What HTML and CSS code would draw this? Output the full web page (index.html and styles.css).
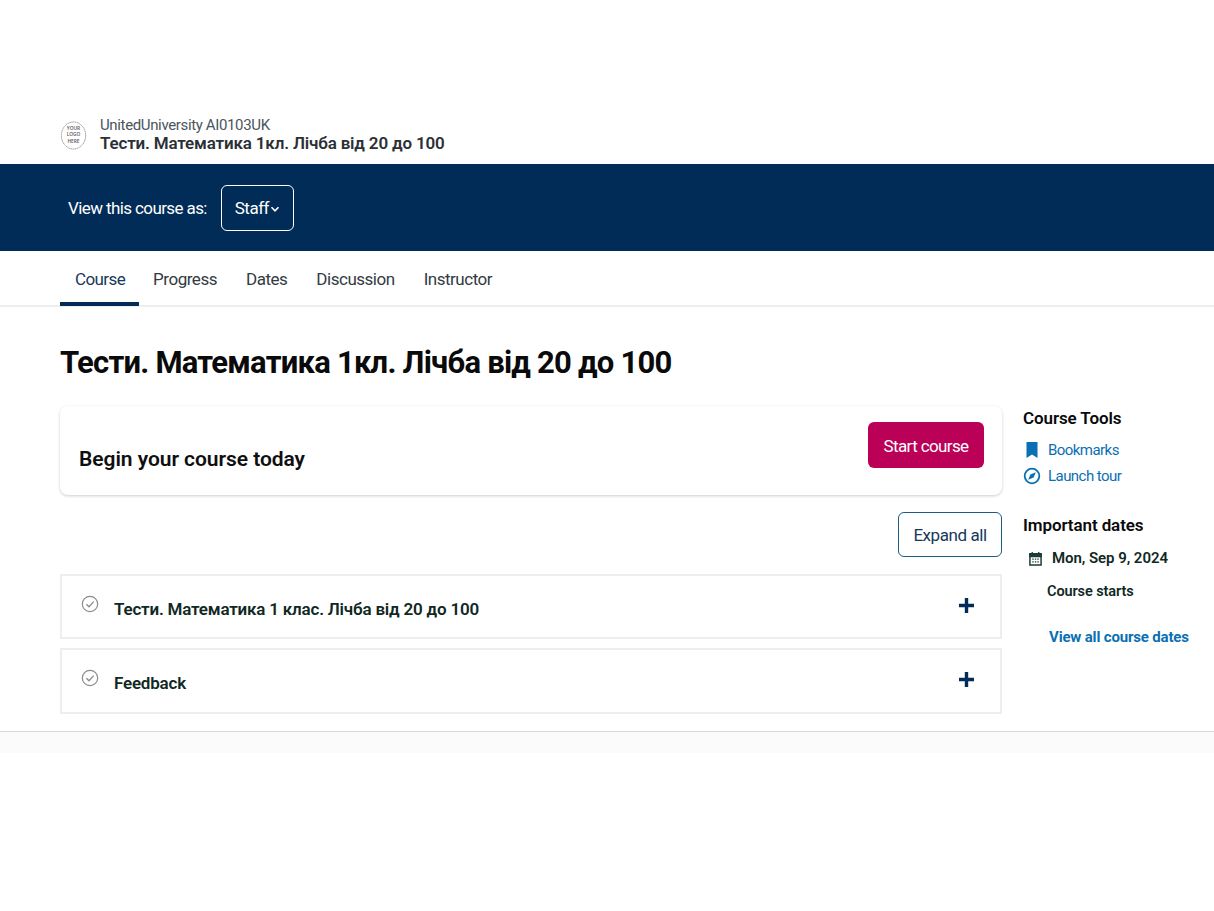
FILE: index.html
```html
<!DOCTYPE html>
<html lang="uk">
<head>
<meta charset="utf-8">
<title>Тести. Математика 1кл.</title>
<link rel="stylesheet" href="styles.css">
</head>
<body>
<header class="site-header">
  <svg class="logo" viewBox="0 0 28 32" width="27" height="31" aria-hidden="true">
    <ellipse cx="14" cy="16" rx="12.6" ry="14" fill="#fff" stroke="#8f8f8f" stroke-width="1" stroke-dasharray="1.4 .6"/>
    <text x="14" y="10.5" class="logo-text">YOUR</text>
    <text x="14" y="17" class="logo-text">LOGO</text>
    <text x="14" y="23.5" class="logo-text">HERE</text>
  </svg>
  <div class="header-text">
    <div class="org">UnitedUniversity AI0103UK</div>
    <div class="header-title">Тести. Математика 1кл. Лічба від 20 до 100</div>
  </div>
</header>
<div class="masquerade">
  <span class="mq-label">View this course as:</span>
  <button class="mq-btn">Staff<svg class="chev" viewBox="0 0 10 10" width="10" height="10"><path d="M1.500 3.200 5 6.800l3.500-3.600" fill="none" stroke="#fff" stroke-width="1.600"/></svg></button>
</div>
<nav class="tabs">
  <a class="tab active">Course</a>
  <a class="tab">Progress</a>
  <a class="tab">Dates</a>
  <a class="tab">Discussion</a>
  <a class="tab">Instructor</a>
</nav>
<main class="content">
  <h1 class="page-title">Тести. Математика 1кл. Лічба від 20 до 100</h1>
  <div class="columns">
    <div class="main-col">
      <section class="start-card">
        <h2 class="start-heading">Begin your course today</h2>
        <button class="start-btn">Start course</button>
      </section>
      <div class="expand-row"><button class="expand-btn">Expand all</button></div>
      <section class="outline-row">
        <svg class="check" viewBox="0 0 18 18" width="18" height="18"><circle cx="9" cy="9" r="7.700" fill="none" stroke="#8c8c8c" stroke-width="1.200"/><path d="M5.400 9.200 8 11.800l4.700-5.200" fill="none" stroke="#8c8c8c" stroke-width="1.300"/></svg>
        <span class="outline-title">Тести. Математика 1 клас. Лічба від 20 до 100</span>
        <svg class="plus" viewBox="0 0 15 15" width="15" height="15"><path d="M7.500 0v15M0 7.500h15" stroke="#002c57" stroke-width="3.400"/></svg>
      </section>
      <section class="outline-row">
        <svg class="check" viewBox="0 0 18 18" width="18" height="18"><circle cx="9" cy="9" r="7.700" fill="none" stroke="#8c8c8c" stroke-width="1.200"/><path d="M5.400 9.200 8 11.800l4.700-5.200" fill="none" stroke="#8c8c8c" stroke-width="1.300"/></svg>
        <span class="outline-title">Feedback</span>
        <svg class="plus" viewBox="0 0 15 15" width="15" height="15"><path d="M7.500 0v15M0 7.500h15" stroke="#002c57" stroke-width="3.400"/></svg>
      </section>
    </div>
    <aside class="sidebar">
      <h3 class="side-heading">Course Tools</h3>
      <a class="tool"><svg viewBox="0 0 18 18" width="18" height="18"><path d="M3.500 1h11v16L9 13.400 3.500 17z" fill="#0a6fb3"/></svg>Bookmarks</a>
      <a class="tool"><svg viewBox="0 0 18 18" width="18" height="18"><circle cx="9" cy="9" r="7.300" fill="none" stroke="#0a6fb3" stroke-width="1.800"/><path d="M12.800 5.200 10.600 10.600 5.200 12.800 7.400 7.400z" fill="#0a6fb3"/></svg>Launch tour</a>
      <h3 class="side-heading dates-heading">Important dates</h3>
      <div class="date-row"><svg viewBox="0 0 14 16" width="13" height="15"><path d="M1 3h12v12H1z" fill="none" stroke="#1c3a36" stroke-width="1.600"/><path d="M1 3h12v3H1zM3.500 1v2M10.500 1v2" fill="#1c3a36" stroke="#1c3a36" stroke-width="1.400"/><path d="M3.500 8h1.500v1.400H3.500zM6.300 8h1.500v1.400H6.300zM9 8h1.500v1.400H9zM3.500 11h1.500v1.400H3.500zM6.300 11h1.500v1.400H6.300zM9 11h1.500v1.400H9z" fill="#1c3a36"/></svg><span>Mon, Sep 9, 2024</span></div>
      <div class="date-desc">Course starts</div>
      <a class="all-dates">View all course dates</a>
    </aside>
  </div>
</main>
<footer class="footer"></footer>
</body>
</html>
```
FILE: styles.css
```css
* { box-sizing: border-box; }
html, body { margin: 0; padding: 0; background: #fff; }
body { font-family: Roboto, "Open Sans", sans-serif; color: #111; }
button { font-family: inherit; cursor: pointer; }

.site-header { height: 164px; padding: 118px 60px 0; display: flex; align-items: flex-start; gap: 13px; }
.logo { flex: none; margin-top: 2px; }
.logo-text { font-family: "Open Sans", sans-serif; font-size: 5px; font-weight: 600; text-anchor: middle; fill: #555; }
.header-text { display: flex; flex-direction: column; margin-top: -2px; }
.org { font-size: 15px; line-height: 18px; color: #4a5560; letter-spacing: -.36px; }
.header-title { font-size: 17px; line-height: 18px; font-weight: 600; color: #2b3036; letter-spacing: -.17px; }

.masquerade { height: 87px; background: #002c57; display: flex; align-items: center; padding: 0 68px; gap: 14px; }
.mq-label { color: #fff; font-size: 17px; letter-spacing: -.6px; padding-top: 1px; }
.mq-btn { width: 73px; height: 46px; background: transparent; border: 1px solid #fff; border-radius: 6px; color: #fff; font-size: 17px; letter-spacing: -.5px; display: flex; align-items: center; justify-content: center; gap: 1px; padding: 1px 0 0; }
.chev { flex: none; margin-top: 1px; }

.tabs { height: 56px; padding: 0 60px; display: flex; border-bottom: 2px solid #eeeeee; }
.tab { height: 55px; display: flex; align-items: center; padding: 1px 15px 0 14px; font-size: 17px; color: #333a41; letter-spacing: -.48px; }
.tab.active { color: #17385a; padding: 5px 14px 0 15px; letter-spacing: -.6px; border-bottom: 4px solid #002c57; }

.content { padding: 0 0 0 60px; height: 424px; }
.page-title { margin: 0; padding-top: 34px; font-size: 31px; line-height: 44px; font-weight: 700; color: #0a0a0a; letter-spacing: -.77px; }
.columns { display: flex; gap: 21px; margin-top: 21px; }
.main-col { width: 942px; flex: none; }

.start-card { height: 89px; background: #fff; border-radius: 8px; box-shadow: 0 1px 3px rgba(0,0,0,.2); padding: 16px 18px 0 19px; display: flex; justify-content: space-between; align-items: flex-start; }
.start-heading { margin: 0; padding-top: 21px; font-size: 21px; line-height: 32px; font-weight: 600; color: #0f0f0f; letter-spacing: -.05px; }
.start-btn { width: 116px; height: 46px; background: #bb0058; border: 0; border-radius: 6px; color: #fff; font-size: 17px; letter-spacing: -.63px; padding: 1px 0 0; }

.expand-row { display: flex; justify-content: flex-end; margin: 17px 0; }
.expand-btn { width: 104px; height: 45px; background: #fff; border: 1px solid #1b5c85; border-radius: 6px; color: #17385a; font-size: 17px; letter-spacing: -.44px; padding: 1px 0 0; }

.outline-row { height: 65px; border: 2px solid #eeeeee; margin-bottom: 9px; display: flex; align-items: flex-start; padding: 19px 26px 0 19px; }
.outline-row + .outline-row { height: 66px; }
.check { flex: none; margin-right: 15px; }
.outline-title { flex: 1; font-size: 17px; line-height: 26px; font-weight: 600; color: #10281f; margin-top: 1px; letter-spacing: -.2px; }
.plus { flex: none; margin-top: 3px; }

.sidebar { flex: 1; min-width: 0; }
.side-heading { margin: 0; font-size: 17px; line-height: 24px; font-weight: 600; color: #0a0a0a; letter-spacing: -.1px; }
.tool { display: flex; align-items: center; gap: 7px; height: 26px; font-size: 15px; color: #0a6fb3; letter-spacing: -.55px; }
.side-heading + .tool { margin-top: 7px; }
.dates-heading { margin-top: 24px; }
.date-row { display: flex; align-items: center; gap: 10px; height: 26px; margin: 8px 0 0 6px; font-size: 15px; font-weight: 600; color: #10281f; letter-spacing: -.05px; }
.date-row svg { flex: none; }
.date-desc { margin: 8px 0 0 24px; font-size: 14.500px; line-height: 26px; font-weight: 600; color: #10281f; letter-spacing: -.1px; }
.all-dates { display: block; margin: 19px 0 0 26px; font-size: 15px; line-height: 26px; font-weight: 700; color: #0a6fb3; white-space: nowrap; letter-spacing: -.17px; }

.footer { height: 22px; background: #fbfbfb; border-top: 1px solid #d9d9d9; }
```
